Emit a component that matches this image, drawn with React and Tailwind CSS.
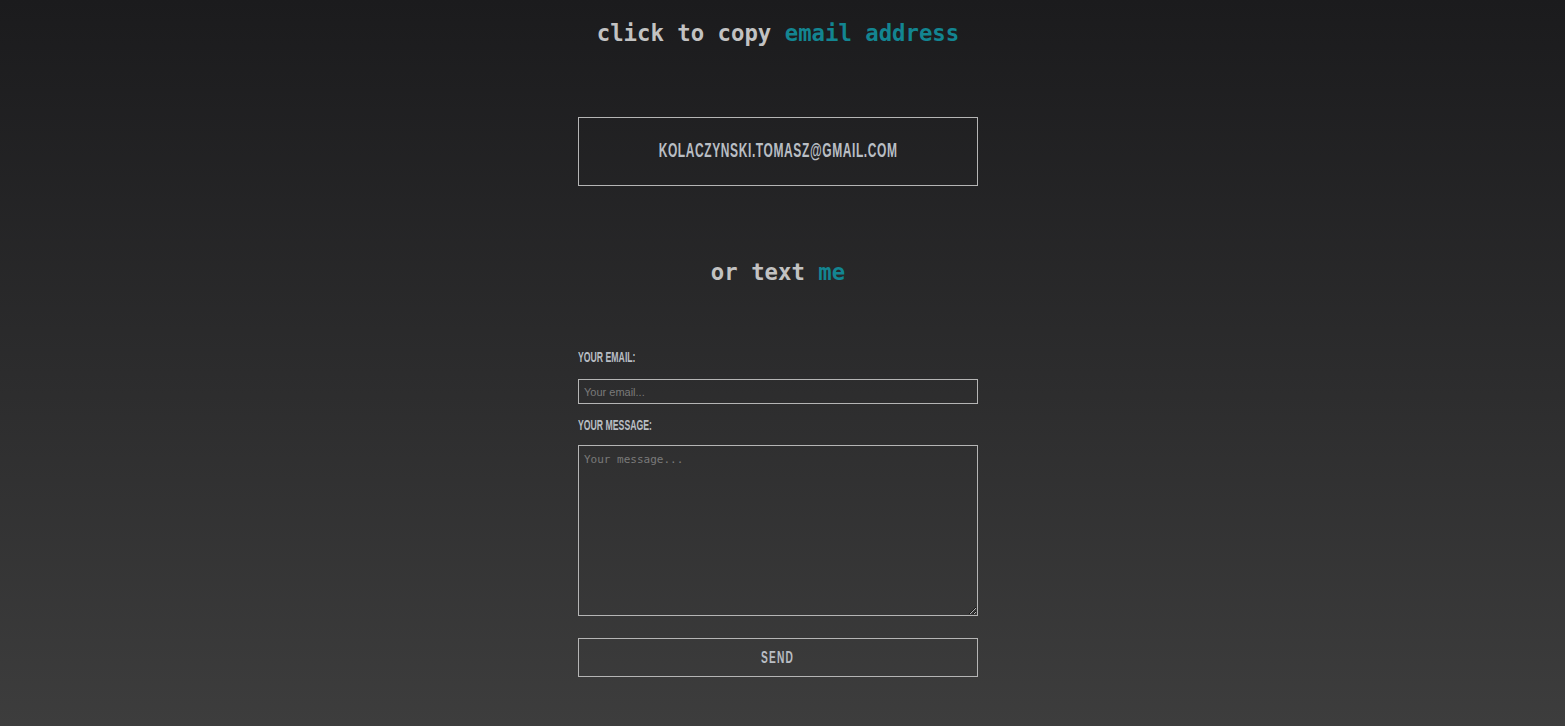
import { useState } from 'react';

export default function App() {
  const [email, setEmail] = useState('');
  const [message, setMessage] = useState('');

  return (
    <div className="min-h-screen h-[726px] w-full bg-linear-to-b from-[#1b1b1d] to-[#3d3d3d] flex flex-col items-center pr-[9px]">
      <h2 className="mt-[20px] h-[26px] leading-[26px] text-[22.3px] font-bold text-[#c2c2c2] font-['DejaVu_Sans_Mono',monospace]">
        click to copy <span className="text-[#138591]">email address</span>
      </h2>

      <button
        type="button"
        className="mt-[71px] w-[400px] h-[69px] pb-[3px] border border-[#b5b5b5] flex items-center justify-center text-[#b9bec4] font-['Liberation_Sans',Arial,sans-serif]"
      >
        <span className="inline-block scale-x-[0.6] text-[20px] font-bold tracking-[1px] uppercase whitespace-nowrap">
          kolaczynski.tomasz@gmail.com
        </span>
      </button>

      <h2 className="mt-[73px] h-[26px] leading-[26px] text-[22.3px] font-bold text-[#c2c2c2] font-['DejaVu_Sans_Mono',monospace]">
        or text <span className="text-[#138591]">me</span>
      </h2>

      <form className="mt-[65px] w-[400px] flex flex-col" onSubmit={(e) => e.preventDefault()}>
        <label className="h-[14px] leading-[14px] text-[15px] font-bold uppercase text-[#b9bec4] font-['Liberation_Sans',Arial,sans-serif]">
          <span className="inline-block origin-left scale-x-[0.58] whitespace-nowrap">Your email:</span>
        </label>
        <input
          type="email"
          value={email}
          onChange={(e) => setEmail(e.target.value)}
          placeholder="Your email..."
          className="mt-[15px] h-[25px] w-full border border-[#b5b5b5] bg-transparent px-[5px] text-[11px] text-[#c2c2c2] placeholder:text-[#7a7a7a] outline-none font-['Liberation_Sans',Arial,sans-serif]"
        />
        <label className="mt-[14px] h-[14px] leading-[14px] text-[15px] font-bold uppercase text-[#b9bec4] font-['Liberation_Sans',Arial,sans-serif]">
          <span className="inline-block origin-left scale-x-[0.58] whitespace-nowrap">Your message:</span>
        </label>
        <textarea
          value={message}
          onChange={(e) => setMessage(e.target.value)}
          placeholder="Your message..."
          className="mt-[13px] h-[171px] w-full border border-[#b5b5b5] bg-transparent px-[5px] py-[6px] text-[11px] text-[#c2c2c2] placeholder:text-[#7a7a7a] outline-none resize font-['DejaVu_Sans_Mono',monospace]"
        />
        <button
          type="submit"
          className="mt-[22px] h-[39px] w-full border border-[#b5b5b5] flex items-center justify-center text-[#b9bec4] font-['Liberation_Sans',Arial,sans-serif]"
        >
          <span className="inline-block scale-x-[0.6] text-[17px] font-bold tracking-[2px] uppercase">Send</span>
        </button>
      </form>
    </div>
  );
}
